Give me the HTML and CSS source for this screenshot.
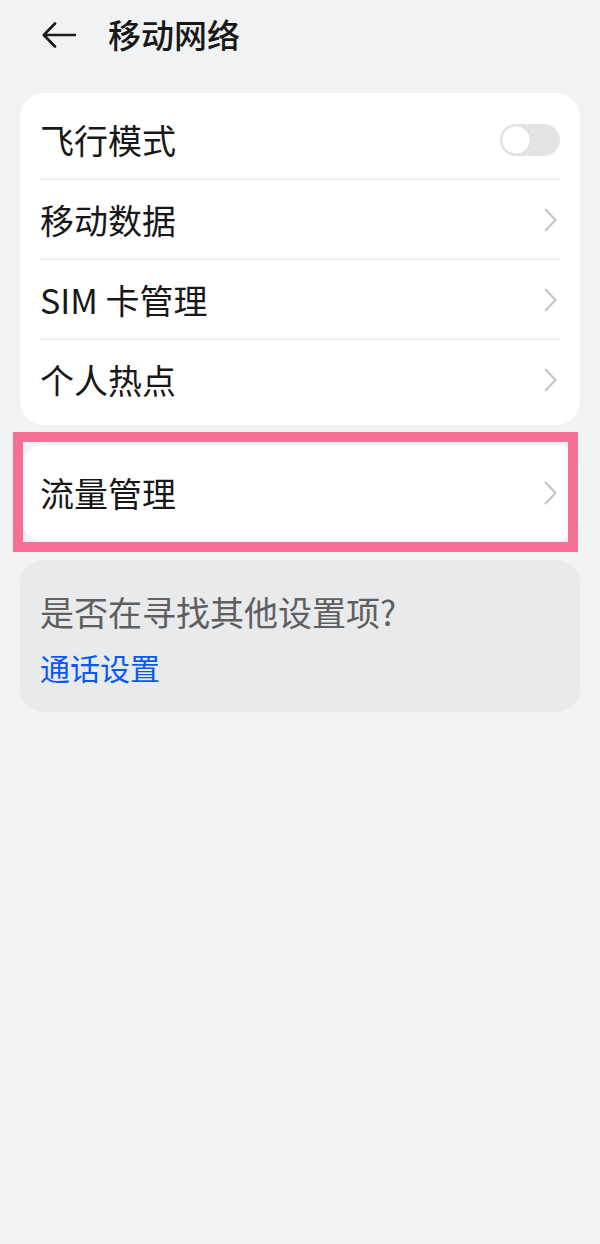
FILE: index.html
```html
<!DOCTYPE html>
<html lang="zh-CN">
<head>
    <meta charset="UTF-8">
    <meta name="viewport" content="width=device-width, initial-scale=1.0">
    <title>移动网络</title>
    <link rel="stylesheet" href="styles.css">
</head>
<body>

    <!-- Title bar -->
    <div class="header">
        <svg class="back" width="34" height="26" viewBox="0 0 34 26">
            <path d="M13 1.5 L1.8 13 L13 24.5 M2 13 H33" fill="none" stroke="#1a1a1a" stroke-width="2.6" stroke-linecap="round" stroke-linejoin="round"/>
        </svg>
        <h1 class="title">移动网络</h1>
    </div>

    <div class="page">

        <!-- Main settings -->
        <div class="card list">
            <div class="row">
                <span class="label">飞行模式</span>
                <span class="switch"><span class="knob"></span></span>
            </div>
            <div class="row">
                <span class="label">移动数据</span>
                <svg class="chevron" width="13" height="24" viewBox="0 0 13 24"><path d="M1.5 1.5 L11.5 12 L1.5 22.5" /></svg>
            </div>
            <div class="row">
                <span class="label">SIM 卡管理</span>
                <svg class="chevron" width="13" height="24" viewBox="0 0 13 24"><path d="M1.5 1.5 L11.5 12 L1.5 22.5" /></svg>
            </div>
            <div class="row">
                <span class="label">个人热点</span>
                <svg class="chevron" width="13" height="24" viewBox="0 0 13 24"><path d="M1.5 1.5 L11.5 12 L1.5 22.5" /></svg>
            </div>
        </div>

        <!-- Highlighted item -->
        <div class="highlight">
            <div class="card single">
                <div class="row">
                    <span class="label">流量管理</span>
                    <svg class="chevron" width="13" height="24" viewBox="0 0 13 24"><path d="M1.5 1.5 L11.5 12 L1.5 22.5" /></svg>
                </div>
            </div>
            <div class="mark"></div>
        </div>

        <!-- Suggestion -->
        <div class="card hint">
            <p class="hint-text">是否在寻找其他设置项?</p>
            <a class="hint-link" href="#">通话设置</a>
        </div>

    </div>

</body>
</html>
```

FILE: styles.css
```css
body {
    margin: 0;
    background-color: #f1f2f4;
    font-family: "Noto Sans CJK SC", "Noto Sans", sans-serif;
    color: #181818;
}

/* Title bar */
.header {
    height: 93px;
    display: flex;
    align-items: flex-start;
    padding-left: 42px;
    box-sizing: border-box;
}

.header .back {
    margin-top: 22px;
}

.title {
    margin: 0 0 0 32px;
    font-size: 33px;
    font-weight: 500;
    line-height: 68px;
}

.page {
    padding: 0 20px;
}

.card {
    background: #fff;
    border-radius: 24px;
}

.list {
    padding: 7px 0 5px;
}

.row {
    height: 80px;
    margin: 0 20px;
    display: flex;
    align-items: center;
    justify-content: space-between;
    border-bottom: 1px solid #e6e6e8;
    box-sizing: border-box;
}

.row:last-child {
    border-bottom: none;
}

.label {
    font-size: 34px;
    line-height: 1;
}

.chevron {
    margin-right: 3px;
}

.chevron path {
    fill: none;
    stroke: #c4c4c6;
    stroke-width: 2;
    stroke-linecap: round;
    stroke-linejoin: round;
}

/* Switch */
.switch {
    width: 60px;
    height: 32px;
    border-radius: 16px;
    background: #e4e4e6;
    display: flex;
    align-items: center;
    padding: 0 2px;
    box-sizing: border-box;
}

.knob {
    width: 28px;
    height: 28px;
    border-radius: 50%;
    background: #fff;
    box-shadow: 0 0 1px rgba(0, 0, 0, 0.25);
}

/* Highlighted item */
.highlight {
    position: relative;
    margin-top: 20px;
}

.single {
    padding: 8px 0;
}

.mark {
    position: absolute;
    left: -7px;
    top: -13px;
    right: 2px;
    bottom: -11px;
    border: 10px solid #f76f95;
}

/* Suggestion */
.hint {
    margin-top: 19px;
    background: #e9eaec;
    padding: 30px 20px 23px;
}

.hint-text {
    margin: 0;
    font-size: 34px;
    line-height: 44px;
    color: #5f5f61;
}

.hint-link {
    display: block;
    margin-top: 11px;
    font-size: 30px;
    line-height: 44px;
    color: #0a59f7;
    text-decoration: none;
}
```
